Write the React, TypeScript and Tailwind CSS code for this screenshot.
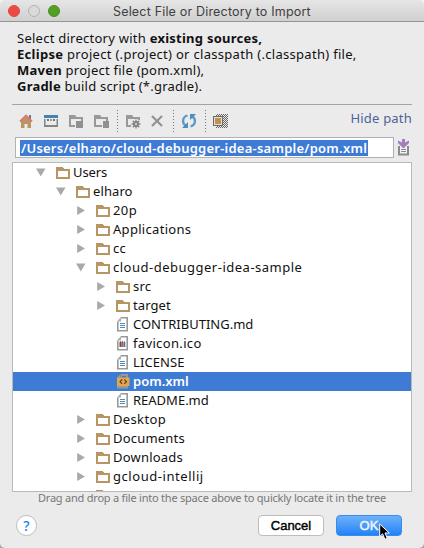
import React from "react";

const FONT = "font-['Noto_Sans','Open_Sans',sans-serif]";

function FolderIcon() {
  return (
    <svg width="14" height="12" viewBox="0 0 14 12" className="shrink-0" shapeRendering="crispEdges">
      <path fillRule="evenodd" fill="#b89664" d="M0 0h6.5l1.5 2h6v10H0zM2 4v6h10V4z" />
    </svg>
  );
}

function DocFrame() {
  return (
    <g>
      <path fill="#fff" d="M2 2h9v11H2z" />
      <path fill="none" stroke="#999" strokeWidth="1.600" d="M5 .8h6.200v12.900H1.800V4.500" />
      <path fill="#adadad" d="M1 4.500L5 0v4.500z" />
    </g>
  );
}

function DocIcon() {
  return (
    <svg width="14" height="15" viewBox="0 0 14 15" className="shrink-0">
      <DocFrame />
      <path fill="#4a8db8" shapeRendering="crispEdges" d="M4 6h5v1H4zM4 8h5v1H4zM4 10h5v1H4z" />
    </svg>
  );
}

function IcoIcon() {
  return (
    <svg width="14" height="15" viewBox="0 0 14 15" className="shrink-0">
      <DocFrame />
      <path fill="#555" d="M3.500 6.500l1-1.500 1 1.500V11h-2z" />
      <path fill="#c94f3d" d="M5.500 6l.9-1.500.9 1.500v5H5.500z" />
      <path fill="#3f78a8" d="M7.500 6.500l.9-1.500.9 1.500V11H7.500z" />
    </svg>
  );
}

function XmlIcon() {
  return (
    <svg width="14" height="15" viewBox="0 0 14 15" className="shrink-0">
      <path fill="#999" d="M1 3.500L4.500 0v3.500zM5 0h7v4h-2V2H6v2H5zM1 12h11v2.500H1z" />
      <path fill="#e8a64a" d="M1 3.500h12.500V12H1z" />
      <path fill="none" stroke="#4a3d27" strokeWidth="1.100" d="M6.200 5.500L4 7.700l2.200 2.200M8.300 5.500l2.200 2.200-2.200 2.200" />
    </svg>
  );
}

type Row = {
  name: string;
  level: number;
  kind: "folder" | "doc" | "ico" | "xml";
  open?: boolean;
  tracking: string;
};

const rows: Row[] = [
  { name: "Users", level: 0, kind: "folder", open: true, tracking: "tracking-[-0.1px]" },
  { name: "elharo", level: 1, kind: "folder", open: true, tracking: "tracking-[0.1px]" },
  { name: "20p", level: 2, kind: "folder", tracking: "tracking-[0.4px]" },
  { name: "Applications", level: 2, kind: "folder", tracking: "tracking-[0.3px]" },
  { name: "cc", level: 2, kind: "folder", tracking: "tracking-[0.2px]" },
  { name: "cloud-debugger-idea-sample", level: 2, kind: "folder", open: true, tracking: "tracking-[0.5px]" },
  { name: "src", level: 3, kind: "folder", tracking: "tracking-[0.2px]" },
  { name: "target", level: 3, kind: "folder", tracking: "tracking-[0.1px]" },
  { name: "CONTRIBUTING.md", level: 3, kind: "doc", tracking: "tracking-[0px]" },
  { name: "favicon.ico", level: 3, kind: "ico", tracking: "tracking-[0.35px]" },
  { name: "LICENSE", level: 3, kind: "doc", tracking: "tracking-[0.1px]" },
  { name: "pom.xml", level: 3, kind: "xml", tracking: "tracking-[0px]" },
  { name: "README.md", level: 3, kind: "doc", tracking: "tracking-[0px]" },
  { name: "Desktop", level: 2, kind: "folder", tracking: "tracking-[0.35px]" },
  { name: "Documents", level: 2, kind: "folder", tracking: "tracking-[0.2px]" },
  { name: "Downloads", level: 2, kind: "folder", tracking: "tracking-[0.2px]" },
  { name: "gcloud-intellij", level: 2, kind: "folder", tracking: "tracking-[0.55px]" },
  { name: "", level: 2, kind: "folder", tracking: "tracking-[0px]" },
];

const indent = ["pl-[23px]", "pl-[43px]", "pl-[63px]", "pl-[83px]"];

function TreeRow({ row }: { row: Row }) {
  const selected = row.name === "pom.xml";
  return (
    <div
      className={`flex h-[19px] shrink-0 items-center ${indent[row.level]} ${
        selected ? "bg-[#3e7bd5] font-semibold text-white" : "text-[#111]"
      }`}
    >
      <span className="flex w-5 shrink-0">
        {row.kind === "folder" && row.name !== "" && (
          <svg width="10" height="9" viewBox="0 0 10 9">
            <path fill="#a9a9a9" d={row.open ? "M0 .5h9.500L4.800 8.500z" : "M1.200 0v9L9 4.500z"} />
          </svg>
        )}
      </span>
      {row.kind === "folder" ? <FolderIcon /> : row.kind === "doc" ? <DocIcon /> : row.kind === "ico" ? <IcoIcon /> : <XmlIcon />}
      <span className={`ml-[3px] whitespace-nowrap leading-[19px] ${row.tracking}`}>{row.name}</span>
    </div>
  );
}

function Divider() {
  return (
    <svg width="1" height="23" viewBox="0 0 1 23" className="shrink-0">
      <path stroke="#777" strokeDasharray="1 2" d="M.5 0v23" />
    </svg>
  );
}

function ToolFolder({ gear, tab }: { gear?: boolean; tab?: boolean }) {
  return (
    <svg width="16" height="16" viewBox="0 0 16 16" className="shrink-0">
      <path fillRule="evenodd" fill="#999" d="M1 2h6l1.500 2H15v10H1zM3 6v6h10V6z" />
      {gear ? (
        <g>
          <path fill="#ebebeb" d="M6 6h10v10H6z" />
          <path fill="#999" d="M6 4h9v3h-2V6H6z" />
          <circle cx="11" cy="11" r="3" fill="#858585" />
          <path stroke="#858585" strokeWidth="1.300" d="M11 6.500v9M6.500 11h9M7.800 7.800l6.400 6.400M14.200 7.800l-6.400 6.400" />
          <circle cx="11" cy="11" r="1" fill="#ddd" />
        </g>
      ) : (
        <g>
          <path fill="#ebebeb" d={tab ? "M7 7h9v9H7z" : "M9 7h7v9H9z"} />
          <path fill="#999" d="M13 4h2v4h-2z" />
          <path fill="#909090" d={tab ? "M8 8h7v7H8z" : "M10 8h6v7h-6z"} />
        </g>
      )}
    </svg>
  );
}

export default function App() {
  return (
    <div className="h-[548px] w-[424px] bg-linear-to-b from-[#f4f4f4] to-[#a8a8a8]">
      <div className={`flex h-[548px] w-[424px] flex-col overflow-hidden rounded-[5px] bg-[#ebebeb] text-[13px] ${FONT}`}>
        <header className="flex h-[22px] shrink-0 items-center border-b border-[#949494] bg-linear-to-b from-[#e6e6e6] to-[#d0d0d0] pl-2">
          <span className="size-3 rounded-full border border-[#dd4a42] bg-[#ec4b42]" />
          <span className="ml-2 size-3 rounded-full border border-[#b2b2b2] bg-[#dadada]" />
          <span className="ml-2 size-3 rounded-full border border-[#478e20] bg-[#52a024]" />
          <h1 className="ml-[53px] whitespace-nowrap pt-[2px] font-[Inter,sans-serif] text-[12.500px] leading-5 tracking-[0.18px] text-[#404040]">
            Select File or Directory to Import
          </h1>
        </header>

        <div className="ml-[17px] mt-[8px] h-[64px] shrink-0 whitespace-nowrap leading-4 text-[#111]">
          <p className="tracking-[0.25px]">Select directory with <b>existing sources,</b></p>
          <p className="tracking-[0.3px]"><b>Eclipse</b> project (.project) or classpath (.classpath) file,</p>
          <p className="tracking-[0.25px]"><b>Maven</b> project file (pom.xml),</p>
          <p className="tracking-[0.22px]"><b>Gradle</b> build script (*.gradle).</p>
        </div>
        <div className="mx-3 mt-[10px] h-px shrink-0 bg-[#a3a3a3]" />

        <div className="ml-[18px] mr-3 mt-[4px] flex h-[24px] shrink-0 items-center">
          <svg width="16" height="16" viewBox="0 0 16 16" className="shrink-0">
            <path fill="#777" d="M11 2h2v4h-2z" />
            <path fill="#b89664" d="M3 8l5-4.500L13 8v7H9.500v-4h-3v4H3z" />
            <path fill="none" stroke="#d97878" strokeWidth="1.800" d="M2 8.500l6-6 6 6" />
          </svg>
          <svg width="14" height="12" viewBox="0 0 14 12" className="ml-[10px] shrink-0">
            <path fill="#4682ad" d="M0 0h14v3H0z" />
            <path fill="#858585" d="M0 4h1.500v6h11V4H14v8H0z" />
            <path fill="#4682ad" d="M3 4h2v2H3z" />
            <path fill="#c09152" d="M6 4h2v2H6z" />
            <path fill="#4682ad" d="M9 4h2v2H9z" />
          </svg>
          <div className="ml-[10px] flex"><ToolFolder tab /></div>
          <div className="ml-[9px] flex"><ToolFolder /></div>
          <div className="ml-[8px] flex"><Divider /></div>
          <div className="ml-[7px] flex"><ToolFolder gear /></div>
          <svg width="12" height="12" viewBox="0 0 12 12" className="ml-[10px] shrink-0">
            <path stroke="#929292" strokeWidth="2.200" d="M1 1l10 10M11 1L1 11" />
          </svg>
          <div className="ml-[10px] flex"><Divider /></div>
          <svg width="16" height="16" viewBox="0 0 16 16" className="ml-[7px] shrink-0">
            <path fill="none" stroke="#5b9ac2" strokeWidth="2.300" d="M6.500 2.500C1 4 1 10 4.500 12.500M9.500 13.500C15 12 15 6 11.500 3.500" />
            <path fill="#4d8fba" d="M1 15h6V9zM15 1H9v6z" />
          </svg>
          <div className="ml-[8px] flex"><Divider /></div>
          <svg width="15" height="14" viewBox="0 0 15 14" className="ml-[7px] shrink-0" shapeRendering="crispEdges">
            <defs>
              <pattern id="checker" width="2" height="2" patternUnits="userSpaceOnUse">
                <path fill="#666" d="M0 0h1v1H0zM1 1h1v1H1z" />
              </pattern>
            </defs>
            <path fill="url(#checker)" d="M3 0h12v14H3z" />
            <path fill="#6b6b6b" d="M0 2h10v10H0z" />
            <path fill="#e8dfd2" d="M1 3h8v8H1z" />
            <path fill="#c09152" d="M2 4h6v6H2z" />
          </svg>
          <span className="ml-auto mt-[-4px] whitespace-nowrap tracking-[0.2px] text-[#4c639b]">Hide path</span>
        </div>

        <div className="ml-[15px] mr-3 mt-[4px] flex h-[21px] shrink-0 items-center">
          <div className="flex h-[21px] w-[379px] items-center border border-[#b1b1b1] bg-white pl-1">
            <span className="h-4 w-[348px] whitespace-nowrap bg-[#3e7bd5] pl-px font-semibold leading-4 tracking-[0.24px] text-white">
              /Users/elharo/cloud-debugger-idea-sample/pom.xml
            </span>
          </div>
          <svg width="13" height="17" viewBox="0 0 13 17" className="ml-[3px] shrink-0">
            <path fill="#8b8b8b" d="M1 7h11v9.500H1z" />
            <path fill="#f2f2f2" d="M3 6h7v8.500H3z" />
            <path fill="#8b8b8b" d="M4 10h5v1H4zM4 12h5v1H4z" />
            <path fill="#a37dbd" d="M5 0h3v3.500L12 1.500V4L6.500 9.500 1 4V1.500l4 2z" />
          </svg>
        </div>

        <div className="mx-3 mt-1 flex h-[330px] shrink-0 flex-col overflow-hidden border border-[#b9b9b9] bg-white">
          {rows.map((row, i) => (
            <TreeRow key={i} row={row} />
          ))}
        </div>

        <p className="ml-[38px] h-[13px] shrink-0 whitespace-nowrap text-[11px] leading-[12px] tracking-[-0.22px] text-[#777]">
          Drag and drop a file into the space above to quickly locate it in the tree
        </p>

        <footer className="mt-[10px] flex shrink-0 items-center pl-4 pr-[22px]">
          <button className="flex size-[21px] items-center justify-center rounded-full border border-[#bdbdbd] bg-white text-[14px] font-medium leading-none text-[#1681f5]">
            ?
          </button>
          <div className="ml-auto flex gap-3 font-['Liberation_Sans',Arial,sans-serif]">
            <button className="h-[21px] w-[66px] rounded-[4px] border border-[#bdbdbd] bg-white text-[13px] leading-[19px] text-black [-webkit-text-stroke:0.4px_black]">
              Cancel
            </button>
            <button className="relative h-[21px] w-[66px] rounded-[4px] border border-[#3b8bea] bg-linear-to-b from-[#6cb1f9] to-[#1d82f8] text-[13px] leading-[19px] text-[#eef4fd] [-webkit-text-stroke:0.5px_#eef4fd]">
              OK
              <svg width="12" height="18" viewBox="0 0 12 18" className="absolute left-[42px] top-[7px]">
                <path fill="#000" stroke="#fff" strokeWidth="1" strokeLinejoin="round" d="M.7 1v12.500l2.900-2.700 2.300 5.500 2.400-1-2.300-5.300h4.300z" />
              </svg>
            </button>
          </div>
        </footer>
      </div>
    </div>
  );
}
